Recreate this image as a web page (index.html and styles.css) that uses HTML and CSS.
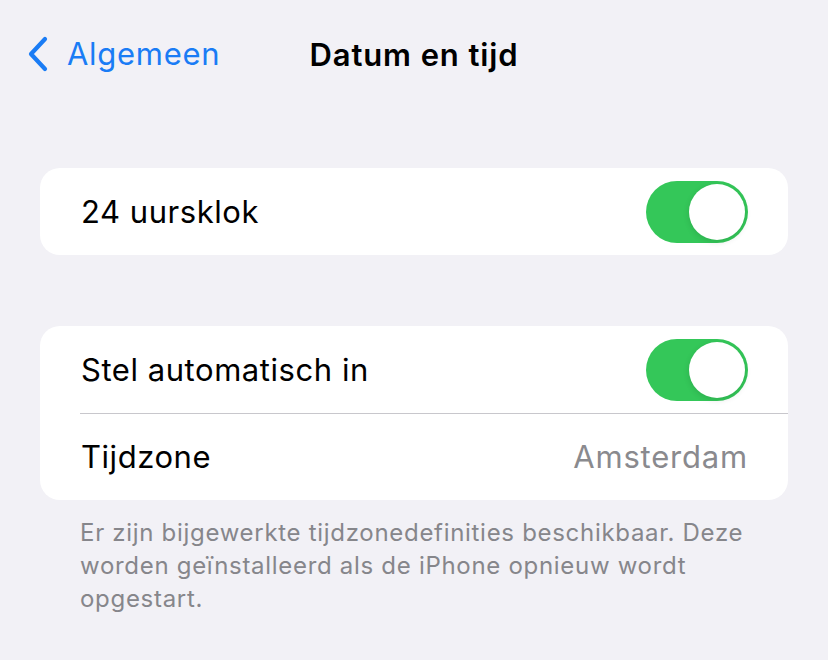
FILE: index.html
```html
<!DOCTYPE html>
<html lang="nl">
<head>
    <meta charset="UTF-8">
    <meta name="viewport" content="width=device-width, initial-scale=1.0">
    <title>Datum en tijd</title>
    <link rel="stylesheet" href="styles.css">
</head>
<body>
    <div class="screen">
        <div class="navbar">
            <a class="back" href="#">
                <svg class="chevron" width="24" height="36" viewBox="0 0 24 36">
                    <path d="M19 3 L5 18 L19 33" fill="none" stroke="#1a7cf5" stroke-width="4.2" stroke-linecap="round" stroke-linejoin="round"/>
                </svg>
                <span>Algemeen</span>
            </a>
            <h1 class="title">Datum en tijd</h1>
        </div>

        <div class="group first">
            <div class="row">
                <span class="label">24 uursklok</span>
                <div class="toggle on"><div class="knob"></div></div>
            </div>
        </div>

        <div class="group">
            <div class="row">
                <span class="label">Stel automatisch in</span>
                <div class="toggle on"><div class="knob"></div></div>
            </div>
            <div class="row">
                <span class="label">Tijdzone</span>
                <span class="value">Amsterdam</span>
            </div>
        </div>
        <p class="footnote">Er zijn bijgewerkte tijdzonedefinities beschikbaar. Deze worden geïnstalleerd als de iPhone opnieuw wordt opgestart.</p>
    </div>
</body>
</html>
```

FILE: styles.css
```css
body {
    margin: 0;
    background-color: #f2f1f6;
    font-family: Inter, 'Noto Sans', Arial, sans-serif;
    color: #000;
}
.screen {
    width: 828px;
    height: 660px;
    overflow: hidden;
}
.navbar {
    position: relative;
    height: 108px;
}
.back {
    position: absolute;
    left: 26px;
    top: 35px;
    display: flex;
    align-items: center;
    gap: 17px;
    color: #1a7cf5;
    text-decoration: none;
    font-size: 31px;
    letter-spacing: 0.7px;
}
.chevron {
    display: block;
}
.title {
    margin: 0;
    padding-top: 36px;
    text-align: center;
    font-size: 31px;
    font-weight: 600;
    letter-spacing: 0.9px;
}
.group {
    margin: 0 40px;
    background-color: #fff;
    border-radius: 20px;
    overflow: hidden;
}
.group.first {
    margin-top: 60px;
    margin-bottom: 71px;
}
.row {
    height: 87px;
    display: flex;
    align-items: center;
    justify-content: space-between;
    padding: 0 40px 0 41px;
    position: relative;
}
.row + .row::before {
    content: "";
    position: absolute;
    top: 0;
    left: 40px;
    right: 0;
    border-top: 1px solid #c8c7cc;
}
.label {
    font-size: 31px;
    letter-spacing: 0.55px;
}
.value {
    font-size: 31px;
    color: #8a8a8e;
    letter-spacing: 0.8px;
}
.toggle {
    width: 102px;
    height: 62px;
    border-radius: 31px;
    background-color: #34c759;
    position: relative;
}
.knob {
    position: absolute;
    top: 3px;
    right: 3px;
    width: 56px;
    height: 56px;
    border-radius: 50%;
    background-color: #fff;
    box-shadow: 0 2px 6px rgba(0,0,0,0.12);
}
.footnote {
    margin: 16px 80px 0 80px;
    font-size: 24px;
    line-height: 33px;
    color: #86868b;
    letter-spacing: 0.7px;
}
```
